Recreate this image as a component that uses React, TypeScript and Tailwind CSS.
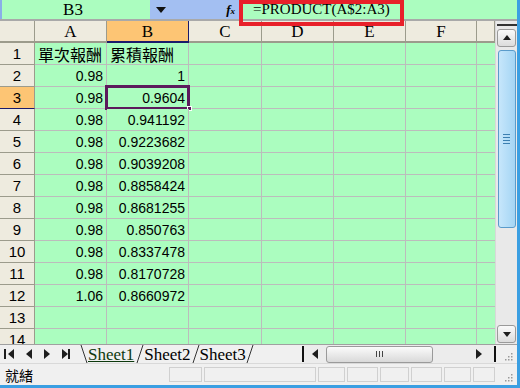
const rows: [string, string, string][] = [
  ["1", "單次報酬", "累積報酬"],
  ["2", "0.98", "1"],
  ["3", "0.98", "0.9604"],
  ["4", "0.98", "0.941192"],
  ["5", "0.98", "0.9223682"],
  ["6", "0.98", "0.9039208"],
  ["7", "0.98", "0.8858424"],
  ["8", "0.98", "0.8681255"],
  ["9", "0.98", "0.850763"],
  ["10", "0.98", "0.8337478"],
  ["11", "0.98", "0.8170728"],
  ["12", "1.06", "0.8660972"],
  ["13", "", ""],
  ["14", "", ""],
];

const grid = "grid grid-cols-[35px_72px_82px_73px_72px_72px_71px_18px]";
const cell = "h-[22px] border-r border-b border-[#bcbcbc] bg-[#abfdbf] flex items-center justify-end pr-[3px] font-['Liberation_Sans'] text-[14px] leading-none text-black";
const rowHead = "h-[22px] border-r border-b border-[#9c9b8c] bg-[#eeebdf] flex items-center justify-center font-['Liberation_Sans'] text-[15px] leading-none text-black";
const cjk = "justify-start pl-[3px] font-['Noto_Sans_CJK_TC'] text-[16px]";

function Cells({ r }: { r: [string, string, string] }) {
  const isText = r[0] === "1";
  const sel = r[0] === "3";
  return (
    <>
      <div className={`${rowHead} ${sel ? "bg-[#fdc574] border-b-[#1a1a6a]" : ""}`}>{r[0]}</div>
      <div className={`${cell} ${isText ? cjk : ""}`}>{r[1]}</div>
      <div className={`${cell} relative ${isText ? cjk : ""}`}>
        {r[2]}
        {sel && (
          <>
            <div className="absolute left-[-2px] top-[-2px] w-[85px] h-[25px] border-[3px] border-[#5c1a5c]" />
            <div className="absolute left-[80px] top-[19px] w-[5px] h-[5px] bg-[#5c1a5c] border border-white" />
          </>
        )}
      </div>
      <div className={cell} />
      <div className={cell} />
      <div className={cell} />
      <div className={cell} />
      <div className={`${cell} border-r-0`} />
    </>
  );
}

function ColHead({ l, sel }: { l: string; sel?: boolean }) {
  return (
    <div
      className={`h-[22px] border-r border-b-2 border-[#9c9b8c] flex items-center justify-center font-['Liberation_Serif'] text-[17px] leading-none text-black ${
        sel ? "bg-[#fdc574] border-r-[#1a1a6a] border-b-[#1a1a6a]" : "bg-[#eeebdf]"
      }`}
    >
      {l}
    </div>
  );
}

function Tri({ dir }: { dir: "l" | "r" | "u" | "d" }) {
  const pts = { l: "8,0 8,10 2,5", r: "2,0 2,10 8,5", u: "1,7 9,7 5,2", d: "1,3 9,3 5,8" }[dir];
  return (
    <svg width="10" height="10" viewBox="0 0 10 10" className="shrink-0">
      <polygon points={pts} fill="#1e1e1e" />
    </svg>
  );
}

function Grip() {
  return (
    <svg width="9" height="9" viewBox="0 0 9 9">
      {[
        [7, 1],
        [4, 4],
        [7, 4],
        [1, 7],
        [4, 7],
        [7, 7],
      ].map(([x, y]) => (
        <rect key={`${x}-${y}`} x={x} y={y} width="1.5" height="1.5" fill="#9a9a9a" />
      ))}
    </svg>
  );
}

export default function App() {
  return (
    <div className="w-[520px] h-[388px] overflow-hidden flex bg-[#f0f0f0]">
      <div className="w-[517px] h-full flex flex-col">
        {/* formula bar */}
        <div className="h-[21px] shrink-0 flex border-b-2 border-[#a9a9a9] relative">
          <div className="w-[2px] bg-[#8aaee8]" />
          <div className="w-[148px] bg-[#abfdbf] flex items-center justify-center pr-[6px] font-['Liberation_Serif'] text-[17px] leading-none">B3</div>
          <div className="w-[89px] bg-[#a3bff2] flex items-center justify-between pl-[6px] pr-[4px]">
            <svg width="10" height="6" viewBox="0 0 10 6">
              <polygon points="0,0 10,0 5,6" fill="#111" />
            </svg>
            <span className="font-['Liberation_Serif'] italic text-[13px] font-bold leading-none">
              f<span className="text-[9px]">x</span>
            </span>
          </div>
          <div className="flex-1 bg-[#abfdbf] flex items-center pl-[14px] font-['Liberation_Serif'] text-[15px] leading-none">
            =PRODUCT(A$2:A3)
          </div>
          <div className="absolute left-[239px] top-0 w-[165px] h-[26px] border-[4px] border-[#e8202a]" />
        </div>

        {/* sheet + vertical scrollbar */}
        <div className="h-[323px] shrink-0 flex overflow-hidden">
          <div className="w-[495px] overflow-hidden">
            <div className={grid}>
              <div className="h-[22px] border-r border-b-2 border-[#9c9b8c] bg-[#eeebdf]" />
              <ColHead l="A" />
              <ColHead l="B" sel />
              <ColHead l="C" />
              <ColHead l="D" />
              <ColHead l="E" />
              <ColHead l="F" />
              <ColHead l="" />
              {rows.map((r) => (
                <Cells key={r[0]} r={r} />
              ))}
            </div>
          </div>
          <div className="w-[22px] flex flex-col items-center bg-[#e9e9e9] border-l border-[#d8d8d8]">
            <div className="w-[20px] h-[2px] mt-[3px] bg-[#333]" />
            <div className="w-[19px] h-[18px] mt-[3px] rounded-[3px] border border-[#9a9a9a] bg-gradient-to-b from-[#fafafa] to-[#dcdcdc] flex items-center justify-center">
              <Tri dir="u" />
            </div>
            <div className="w-[18px] h-[178px] mt-[3px] rounded-[3px] border border-[#5a9bcb] bg-gradient-to-r from-[#c6e6fb] to-[#a4d5f4] flex flex-col items-center justify-center gap-[2px]">
              <div className="w-[7px] h-[1px] bg-[#3c7fb1]" />
              <div className="w-[7px] h-[1px] bg-[#3c7fb1]" />
              <div className="w-[7px] h-[1px] bg-[#3c7fb1]" />
              <div className="w-[7px] h-[1px] bg-[#3c7fb1]" />
            </div>
            <div className="flex-1" />
            <div className="w-[19px] h-[18px] mb-[1px] rounded-[3px] border border-[#9a9a9a] bg-gradient-to-b from-[#fafafa] to-[#dcdcdc] flex items-center justify-center">
              <Tri dir="d" />
            </div>
          </div>
        </div>

        {/* sheet tabs + horizontal scrollbar */}
        <div className="h-[19px] shrink-0 flex items-stretch bg-[#f0f0f0] border-t border-[#a0a0a0]">
          <div className="w-[80px] shrink-0 flex items-center pl-[4px]">
            <div className="w-[2px] h-[10px] bg-[#1e1e1e]" />
            <Tri dir="l" />
            <div className="w-[8px]" />
            <Tri dir="l" />
            <div className="w-[8px]" />
            <Tri dir="r" />
            <div className="w-[8px]" />
            <Tri dir="r" />
            <div className="w-[2px] h-[10px] bg-[#1e1e1e] -ml-[2px]" />
          </div>
          <div className="w-[222px] shrink-0 flex items-stretch font-['Liberation_Serif'] text-[17px] leading-none">
            <svg width="8" height="19" viewBox="0 0 8 19"><line x1="1" y1="0" x2="7" y2="18" stroke="#333" /></svg>
            <span className="flex items-center underline text-[#0e3a0e] pr-[1px]">Sheet1</span>
            <svg width="9" height="19" viewBox="0 0 9 19"><line x1="8" y1="0" x2="2" y2="18" stroke="#333" /></svg>
            <span className="flex items-center">Sheet2</span>
            <svg width="9" height="19" viewBox="0 0 9 19"><line x1="8" y1="0" x2="2" y2="18" stroke="#333" /></svg>
            <span className="flex items-center">Sheet3</span>
            <svg width="8" height="19" viewBox="0 0 8 19"><line x1="7" y1="0" x2="1" y2="18" stroke="#333" /></svg>
          </div>
          <div className="w-[2px] bg-[#111] my-[1px]" />
          <div className="w-[190px] flex items-center bg-[#ececec]">
            <div className="w-[22px] flex justify-center"><Tri dir="l" /></div>
            <div className="w-[107px] h-[17px] rounded-[3px] border border-[#9a9a9a] bg-gradient-to-b from-[#fbfbfb] to-[#d9d9d9] flex items-center justify-center gap-[2px]">
              <div className="w-[1px] h-[6px] bg-[#444]" />
              <div className="w-[1px] h-[6px] bg-[#444]" />
              <div className="w-[1px] h-[6px] bg-[#444]" />
            </div>
            <div className="flex-1 flex justify-end pr-[10px]"><Tri dir="r" /></div>
          </div>
          <div className="w-[2px] bg-[#111] my-[1px]" />
          <div className="flex-1 flex items-end justify-end pr-[4px] pb-[2px]">
            <Grip />
          </div>
        </div>

        {/* status bar */}
        <div className="h-[22px] shrink-0 flex items-center bg-[#f0f0f0] border-t border-[#d9d9d9]">
          <div className="w-[169px] pl-[5px] font-['Noto_Sans_CJK_TC'] text-[14px] leading-none">就緒</div>
          <div className="flex gap-[2px] h-[15px]">
            <div className="w-[33px] border border-[#d0d0d0]" />
            <div className="w-[112px] border border-[#d0d0d0]" />
            <div className="w-[27px] border border-[#d0d0d0]" />
            <div className="w-[31px] border border-[#d0d0d0]" />
            <div className="w-[29px] border border-[#d0d0d0]" />
            <div className="w-[31px] border border-[#d0d0d0]" />
            <div className="w-[27px] border border-[#d0d0d0]" />
            <div className="w-[22px] border border-[#d0d0d0]" />
          </div>
          <div className="flex-1 flex justify-end items-end self-stretch pr-[4px] pb-[3px]">
            <Grip />
          </div>
        </div>
        <div className="flex-1 bg-[#3b9fe2]" />
      </div>
      <div className="w-[3px] h-full bg-[#3b9fe2]" />
    </div>
  );
}
